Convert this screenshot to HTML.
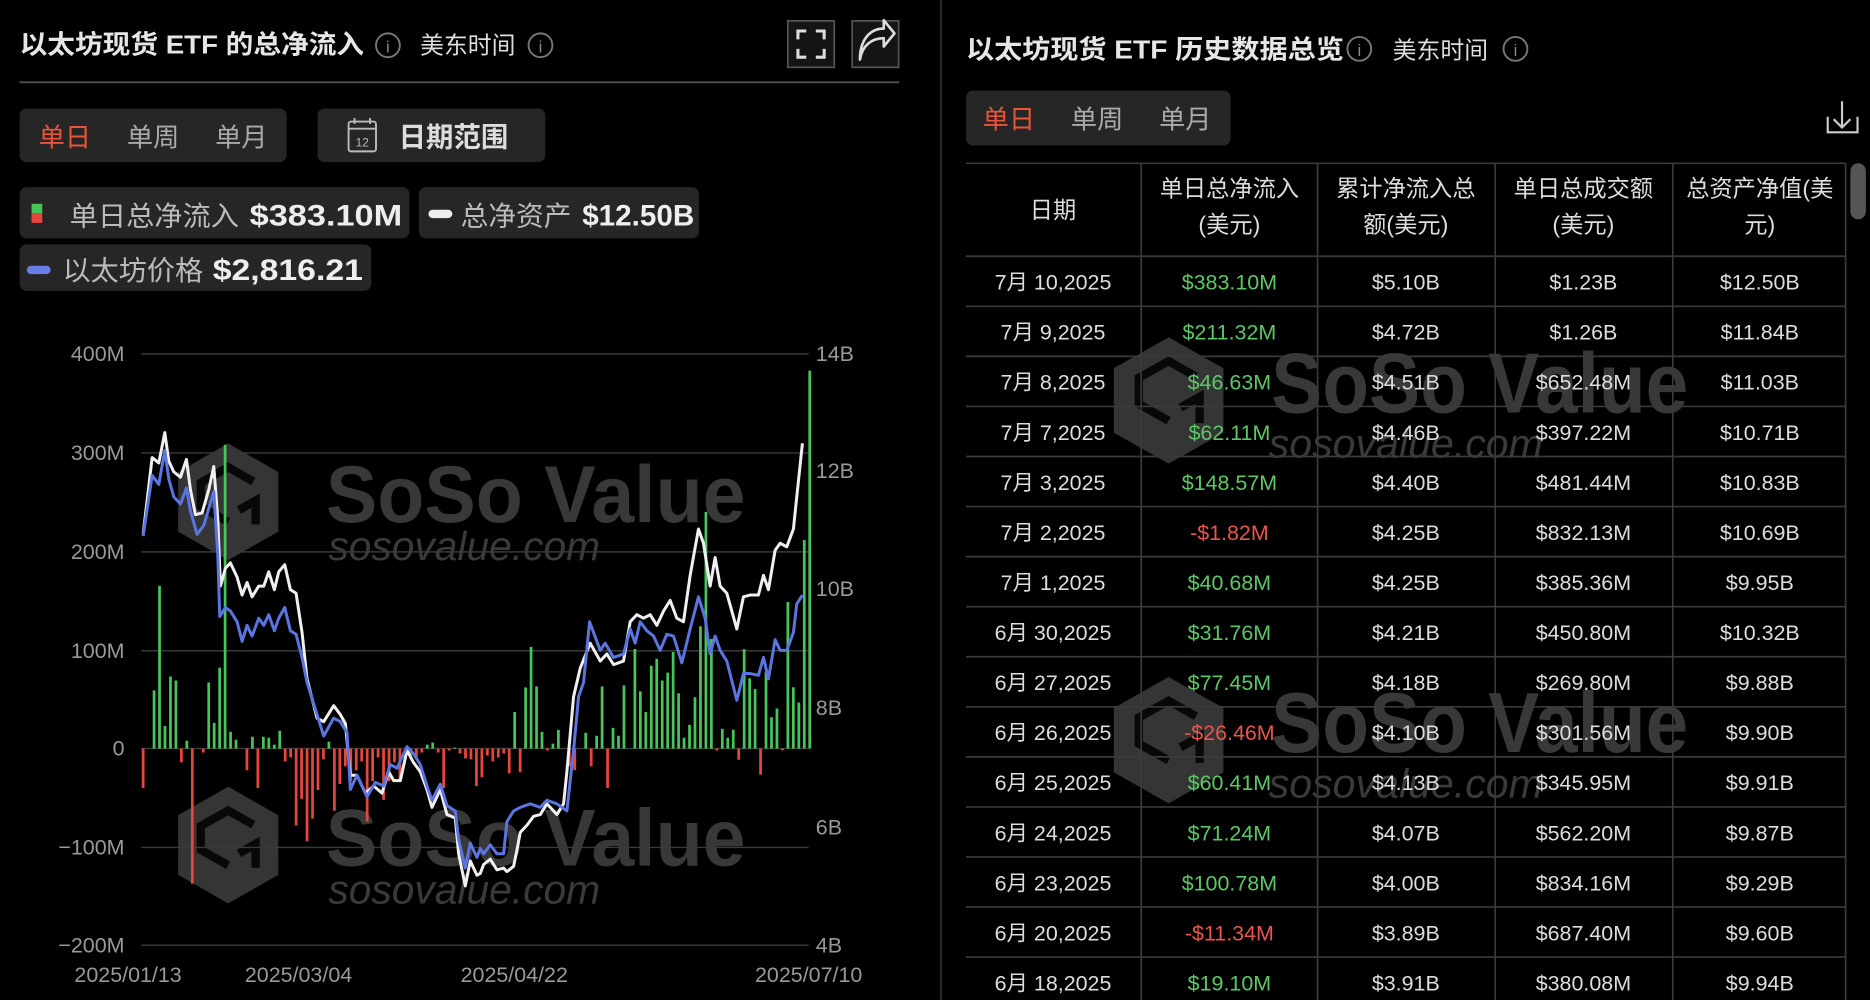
<!DOCTYPE html>
<html><head><meta charset="utf-8"><style>
html,body{margin:0;padding:0;background:#000;width:1870px;height:1000px;overflow:hidden}
svg{display:block}
text{font-family:"Liberation Sans","Noto Sans CJK SC",sans-serif}
</style></head><body>
<svg width="1870" height="1000" viewBox="0 0 1568 839" xmlns="http://www.w3.org/2000/svg">
<rect width="1568" height="839" fill="#000"/>

<!-- ===== LEFT PANEL ===== -->
<text x="16" y="45" font-size="22" font-weight="bold" fill="#e6e6e6" textLength="289" lengthAdjust="spacingAndGlyphs">以太坊现货 ETF 的总净流入</text>
<circle cx="325" cy="38" r="10" fill="none" stroke="#777" stroke-width="1.6"/>
<text x="325" y="44" font-size="14" fill="#888" text-anchor="middle">i</text>
<text x="352" y="45" font-size="20" fill="#ddd" textLength="80" lengthAdjust="spacingAndGlyphs">美东时间</text>
<circle cx="453" cy="38" r="10" fill="none" stroke="#777" stroke-width="1.6"/>
<text x="453" y="44" font-size="14" fill="#888" text-anchor="middle">i</text>

<rect x="660.5" y="17.5" width="39" height="39" fill="#141414" stroke="#555" stroke-width="1.4"/>
<path d="M669 33v-7h7M684 26h7v7M691 41v7h-7M676 48h-7v-7" fill="none" stroke="#ddd" stroke-width="2.6"/>
<rect x="714.5" y="17.5" width="39" height="39" fill="#141414" stroke="#555" stroke-width="1.4"/>
<path d="M721 50c2-12 10-18 20-18v7l9-11-9-11v7c-12 0-20 10-20 26z" fill="none" stroke="#ddd" stroke-width="2.2" stroke-linejoin="round"/>

<line x1="16" y1="69" x2="754" y2="69" stroke="#555" stroke-width="1.5"/>

<rect x="16" y="91" width="224" height="45" rx="6" fill="#262626"/>
<text x="32" y="123" font-size="22" fill="#e8553a">单日</text>
<text x="106" y="123" font-size="22" fill="#aaa">单周</text>
<text x="180" y="123" font-size="22" fill="#aaa">单月</text>
<rect x="266" y="91" width="191" height="45" rx="6" fill="#262626"/>
<rect x="292" y="102" width="23" height="25" rx="2" fill="none" stroke="#bbb" stroke-width="1.6"/>
<line x1="292" y1="108" x2="315" y2="108" stroke="#bbb" stroke-width="1.6"/>
<line x1="297" y1="99" x2="297" y2="104" stroke="#bbb" stroke-width="1.6"/>
<line x1="310" y1="99" x2="310" y2="104" stroke="#bbb" stroke-width="1.6"/>
<text x="303.5" y="123" font-size="10" fill="#bbb" text-anchor="middle">12</text>
<text x="334" y="123" font-size="23" font-weight="bold" fill="#ddd">日期范围</text>

<rect x="16" y="157" width="327" height="43" rx="6" fill="#262626"/>
<rect x="26" y="171" width="9" height="8" fill="#47c45a"/>
<rect x="26" y="179" width="9" height="8" fill="#e8453c"/>
<text x="58" y="189" font-size="23" fill="#bbb" textLength="142" lengthAdjust="spacingAndGlyphs">单日总净流入</text>
<text x="209" y="189" font-size="25" font-weight="bold" fill="#eee" textLength="128" lengthAdjust="spacingAndGlyphs">$383.10M</text>
<rect x="351" y="157" width="235" height="43" rx="6" fill="#262626"/>
<rect x="359" y="176" width="20" height="7" rx="3.5" fill="#eee"/>
<text x="386" y="189" font-size="23" fill="#bbb" textLength="93" lengthAdjust="spacingAndGlyphs">总净资产</text>
<text x="488" y="189" font-size="25" font-weight="bold" fill="#eee" textLength="94" lengthAdjust="spacingAndGlyphs">$12.50B</text>
<rect x="16" y="205" width="295" height="39" rx="6" fill="#262626"/>
<rect x="22" y="223" width="20" height="7" rx="3.5" fill="#6a7fe6"/>
<text x="52" y="235" font-size="23" fill="#bbb" textLength="118" lengthAdjust="spacingAndGlyphs">以太坊价格</text>
<text x="178" y="235" font-size="25" font-weight="bold" fill="#eee" textLength="126" lengthAdjust="spacingAndGlyphs">$2,816.21</text>

<!-- watermarks -->
<g fill="#353535">
  <path d="M191 372 L233 396 L233 446 L191 470 L149 446 L149 396 Z"/>
  <path d="M191 660 L233 684 L233 734 L191 758 L149 734 L149 684 Z"/>
  <path d="M980 283 L1026 309 L1026 363 L980 389 L934 363 L934 309 Z"/>
  <path d="M980 568 L1026 594 L1026 648 L980 674 L934 648 L934 594 Z"/>
</g>
<g fill="none" stroke="#000" stroke-width="7" opacity="0.85">
  <path d="M212 404 L191 392 L168 405 L168 425 L191 438 M200 428 L214 420 L214 440"/>
  <path d="M212 692 L191 680 L168 693 L168 713 L191 726 M200 716 L214 708 L214 728"/>
  <path d="M1003 316 L980 303 L955 317 L955 339 L980 353 M990 342 L1006 333 L1006 355"/>
  <path d="M1003 601 L980 588 L955 602 L955 624 L980 638 M990 627 L1006 618 L1006 640"/>
</g>
<g font-family="Liberation Sans,sans-serif" font-weight="bold" fill="#383838">
  <text x="273" y="438" font-size="68" textLength="352" lengthAdjust="spacingAndGlyphs">SoSo Value</text>
  <text x="273" y="726" font-size="68" textLength="352" lengthAdjust="spacingAndGlyphs">SoSo Value</text>
  <text x="1066" y="346" font-size="72" textLength="350" lengthAdjust="spacingAndGlyphs">SoSo Value</text>
  <text x="1066" y="631" font-size="72" textLength="350" lengthAdjust="spacingAndGlyphs">SoSo Value</text>
</g>
<g font-style="italic" fill="#3a3a3a">
  <text x="275" y="470" font-size="34" textLength="228" lengthAdjust="spacingAndGlyphs">sosovalue.com</text>
  <text x="275" y="758" font-size="34" textLength="228" lengthAdjust="spacingAndGlyphs">sosovalue.com</text>
  <text x="1064" y="384" font-size="34" textLength="230" lengthAdjust="spacingAndGlyphs">sosovalue.com</text>
  <text x="1064" y="669" font-size="34" textLength="230" lengthAdjust="spacingAndGlyphs">sosovalue.com</text>
</g>

<!-- grid -->
<g stroke="#3a3a3a" stroke-width="1.2">
  <line x1="118" y1="297" x2="678" y2="297"/><line x1="118" y1="380" x2="678" y2="380"/>
  <line x1="118" y1="463" x2="678" y2="463"/><line x1="118" y1="546" x2="678" y2="546"/>
  <line x1="118" y1="628" x2="678" y2="628"/><line x1="118" y1="711" x2="678" y2="711"/>
  <line x1="118" y1="793" x2="678" y2="793"/>
</g>
<g font-size="18" fill="#999" text-anchor="end">
  <text x="104" y="303">400M</text><text x="104" y="386">300M</text><text x="104" y="469">200M</text>
  <text x="104" y="552">100M</text><text x="104" y="634">0</text><text x="104" y="717">−100M</text>
  <text x="104" y="799">−200M</text>
</g>
<g font-size="18" fill="#999">
  <text x="684" y="303">14B</text><text x="684" y="401">12B</text><text x="684" y="500">10B</text>
  <text x="684" y="600">8B</text><text x="684" y="700">6B</text><text x="684" y="799">4B</text>
</g>
<g font-size="18" fill="#999" text-anchor="middle">
  <text x="107" y="824">2025/01/13</text><text x="250" y="824">2025/03/04</text>
  <text x="431" y="824">2025/04/22</text><text x="678" y="824">2025/07/10</text>
</g>

<g transform="scale(0.83852)">
 <g transform="translate(141.3,749) scale(5.467,-0.987)">
  <g fill="#47c45a">
   <rect x="2" y="0" width="0.5" height="59"/><rect x="3" y="0" width="0.5" height="165"/><rect x="4" y="0" width="0.5" height="23"/>
   <rect x="5" y="0" width="0.5" height="73"/><rect x="6" y="0" width="0.5" height="69"/><rect x="8" y="0" width="0.5" height="8"/>
   <rect x="12" y="0" width="0.5" height="67"/><rect x="13" y="0" width="0.5" height="26"/><rect x="14" y="0" width="0.5" height="82"/>
   <rect x="15" y="0" width="0.5" height="308"/><rect x="16" y="0" width="0.5" height="17"/><rect x="17" y="0" width="0.5" height="9"/>
   <rect x="20" y="0" width="0.5" height="12"/><rect x="22" y="0" width="0.5" height="12"/><rect x="23" y="0" width="0.5" height="11"/>
   <rect x="24" y="0" width="0.5" height="4"/><rect x="25" y="0" width="0.5" height="18"/><rect x="34" y="0" width="0.5" height="7"/>
   <rect x="52" y="0" width="0.5" height="4"/><rect x="53" y="0" width="0.5" height="6"/><rect x="57" y="0" width="0.5" height="1"/>
   <rect x="68" y="0" width="0.5" height="37"/><rect x="70" y="0" width="0.5" height="62"/><rect x="71" y="0" width="0.5" height="103"/>
   <rect x="72" y="0" width="0.5" height="63"/><rect x="73" y="0" width="0.5" height="17"/><rect x="75" y="0" width="0.5" height="5"/>
   <rect x="76" y="0" width="0.5" height="19"/><rect x="81" y="0" width="0.5" height="16"/><rect x="83" y="0" width="0.5" height="13"/>
   <rect x="84" y="0" width="0.5" height="63"/><rect x="86" y="0" width="0.5" height="21"/><rect x="87" y="0" width="0.5" height="13"/>
   <rect x="88" y="0" width="0.5" height="64"/><rect x="90" y="0" width="0.5" height="101"/><rect x="91" y="0" width="0.5" height="58"/>
   <rect x="92" y="0" width="0.5" height="37"/><rect x="93" y="0" width="0.5" height="84"/><rect x="94" y="0" width="0.5" height="91"/>
   <rect x="95" y="0" width="0.5" height="69"/><rect x="96" y="0" width="0.5" height="77"/><rect x="97" y="0" width="0.5" height="98"/>
   <rect x="98" y="0" width="0.5" height="56"/><rect x="99" y="0" width="0.5" height="11"/><rect x="100" y="0" width="0.5" height="24"/>
   <rect x="101" y="0" width="0.5" height="52"/><rect x="102" y="0" width="0.5" height="124"/><rect x="103" y="0" width="0.5" height="240"/>
   <rect x="104" y="0" width="0.5" height="111"/><rect x="106" y="0" width="0.5" height="20"/><rect x="107" y="0" width="0.5" height="11"/>
   <rect x="108" y="0" width="0.5" height="19.1"/><rect x="110" y="0" width="0.5" height="100.78"/><rect x="111" y="0" width="0.5" height="71.24"/>
   <rect x="112" y="0" width="0.5" height="60.41"/><rect x="114" y="0" width="0.5" height="77.45"/><rect x="115" y="0" width="0.5" height="31.76"/>
   <rect x="116" y="0" width="0.5" height="40.68"/><rect x="118" y="0" width="0.5" height="148.57"/><rect x="119" y="0" width="0.5" height="62.11"/>
   <rect x="120" y="0" width="0.5" height="46.63"/><rect x="121" y="0" width="0.5" height="211.32"/><rect x="122" y="0" width="0.5" height="383.1"/>
  </g>
  <g fill="#e8453c">
   <rect x="0" y="-40" width="0.5" height="40"/><rect x="7" y="-14" width="0.5" height="14"/><rect x="9" y="-137" width="0.5" height="137"/>
   <rect x="11" y="-4" width="0.5" height="4"/><rect x="19" y="-22" width="0.5" height="22"/><rect x="21" y="-40" width="0.5" height="40"/>
   <rect x="26" y="-13" width="0.5" height="13"/><rect x="27" y="-9" width="0.5" height="9"/><rect x="28" y="-78" width="0.5" height="78"/>
   <rect x="29" y="-51" width="0.5" height="51"/><rect x="30" y="-94" width="0.5" height="94"/><rect x="31" y="-71" width="0.5" height="71"/>
   <rect x="32" y="-42" width="0.5" height="42"/><rect x="33" y="-11" width="0.5" height="11"/><rect x="35" y="-63" width="0.5" height="63"/>
   <rect x="36" y="-36" width="0.5" height="36"/><rect x="37" y="-18" width="0.5" height="18"/><rect x="38" y="-33" width="0.5" height="33"/>
   <rect x="39" y="-22" width="0.5" height="22"/><rect x="40" y="-13" width="0.5" height="13"/><rect x="41" y="-74" width="0.5" height="74"/>
   <rect x="42" y="-33" width="0.5" height="33"/><rect x="43" y="-9" width="0.5" height="9"/><rect x="44" y="-52" width="0.5" height="52"/>
   <rect x="45" y="-33" width="0.5" height="33"/><rect x="46" y="-14" width="0.5" height="14"/><rect x="47" y="-33" width="0.5" height="33"/>
   <rect x="48" y="-11" width="0.5" height="11"/><rect x="49" y="-7" width="0.5" height="7"/><rect x="50" y="-9" width="0.5" height="9"/>
   <rect x="51" y="-4" width="0.5" height="4"/><rect x="54" y="-4" width="0.5" height="4"/><rect x="55" y="-40" width="0.5" height="40"/>
   <rect x="56" y="-2" width="0.5" height="2"/><rect x="58" y="-5" width="0.5" height="5"/><rect x="59" y="-10" width="0.5" height="10"/>
   <rect x="60" y="-11" width="0.5" height="11"/><rect x="61" y="-38" width="0.5" height="38"/><rect x="62" y="-29" width="0.5" height="29"/>
   <rect x="63" y="-7" width="0.5" height="7"/><rect x="64" y="-13" width="0.5" height="13"/><rect x="65" y="-9" width="0.5" height="9"/>
   <rect x="66" y="-5" width="0.5" height="5"/><rect x="67" y="-25" width="0.5" height="25"/><rect x="69" y="-24" width="0.5" height="24"/>
   <rect x="74" y="-2" width="0.5" height="2"/><rect x="78" y="-18" width="0.5" height="18"/><rect x="79" y="-22" width="0.5" height="22"/>
   <rect x="82" y="-18" width="0.5" height="18"/><rect x="85" y="-40" width="0.5" height="40"/><rect x="105" y="-2" width="0.5" height="2"/>
   <rect x="109" y="-11.34" width="0.5" height="11.34"/><rect x="113" y="-26.46" width="0.5" height="26.46"/><rect x="117" y="-1.82" width="0.5" height="1.82"/>
  </g>
 </g>
 <g transform="translate(130,340) scale(0.33333,0.35714)" fill="none" stroke-linejoin="round">
  <polyline vector-effect="non-scaling-stroke" stroke="#f0f0f0" stroke-width="3" points="38,545 65,330 85,345 103,260 115,340 130,370 150,385 168,335 180,420 195,490 215,485 235,420 250,355 262,500 270,690 285,640 300,625 320,665 335,715 350,680 365,720 385,690 400,690 415,650 432,700 445,650 463,630 480,700 497,710 515,820 530,950 560,1060 580,1070 610,1025 630,1050 645,1075 660,1220 680,1220 705,1270 730,1250 755,1270 775,1210 790,1235 810,1235 830,1150 850,1185 870,1210 890,1260 905,1310 930,1260 950,1330 975,1340 985,1440 1005,1530 1020,1460 1040,1500 1050,1495 1060,1470 1080,1455 1100,1485 1120,1480 1130,1490 1150,1475 1160,1430 1170,1380 1190,1360 1210,1335 1230,1330 1250,1300 1260,1310 1280,1330 1300,1300 1310,1210 1330,1000 1350,920 1380,850 1410,900 1430,880 1450,910 1480,900 1500,790 1520,770 1540,780 1560,770 1580,800 1600,760 1620,730 1640,780 1660,790 1680,660 1705,530 1720,570 1740,690 1755,610 1770,690 1790,710 1820,810 1840,720 1860,715 1885,715 1900,660 1915,700 1935,590 1950,570 1970,580 1990,530 2000,440 2017,290"/>
  <polyline vector-effect="non-scaling-stroke" stroke="#5b74e0" stroke-width="3" points="38,550 65,380 85,405 103,310 115,390 130,440 150,460 168,415 180,480 200,545 220,520 250,425 262,600 268,775 285,750 300,760 320,790 335,845 350,800 365,830 385,780 400,800 415,770 432,815 445,780 463,750 480,815 497,825 515,890 530,960 560,1050 580,1110 610,1060 630,1070 650,1100 660,1260 680,1220 710,1280 735,1240 760,1250 780,1190 800,1200 830,1140 850,1160 870,1190 890,1250 905,1290 930,1245 950,1305 975,1320 985,1400 1005,1480 1020,1410 1040,1450 1050,1425 1060,1440 1080,1415 1100,1440 1120,1440 1130,1350 1150,1320 1170,1310 1200,1300 1230,1310 1250,1290 1280,1300 1310,1320 1330,1150 1345,1000 1360,960 1378,790 1410,870 1425,850 1450,890 1480,880 1500,810 1515,850 1530,790 1550,815 1570,830 1590,870 1610,825 1630,830 1655,905 1680,810 1705,720 1725,780 1740,880 1755,830 1770,870 1790,900 1820,1010 1840,935 1860,935 1885,940 1900,890 1915,950 1935,840 1950,870 1970,870 1990,820 2000,740 2017,715"/>
 </g>
</g>

<!-- ===== RIGHT PANEL ===== -->
<line x1="789" y1="0" x2="789" y2="839" stroke="#2e2e2e" stroke-width="1.5"/>
<text x="810" y="49" font-size="22" font-weight="bold" fill="#e6e6e6" textLength="317" lengthAdjust="spacingAndGlyphs">以太坊现货 ETF 历史数据总览</text>
<circle cx="1140" cy="41" r="10" fill="none" stroke="#777" stroke-width="1.6"/>
<text x="1140" y="47" font-size="14" fill="#888" text-anchor="middle">i</text>
<text x="1168" y="49" font-size="20" fill="#ddd" textLength="80" lengthAdjust="spacingAndGlyphs">美东时间</text>
<circle cx="1271" cy="41" r="10" fill="none" stroke="#777" stroke-width="1.6"/>
<text x="1271" y="47" font-size="14" fill="#888" text-anchor="middle">i</text>

<rect x="810" y="76" width="222" height="46" rx="6" fill="#262626"/>
<text x="824" y="108" font-size="22" fill="#e8553a">单日</text>
<text x="898" y="108" font-size="22" fill="#aaa">单周</text>
<text x="972" y="108" font-size="22" fill="#aaa">单月</text>
<path d="M1545 85v22M1538 100l7 7 7-7M1533 98v13h25v-13" fill="none" stroke="#ccc" stroke-width="1.8"/>

<rect x="1552" y="137" width="13" height="47" rx="6.5" fill="#555"/>

<g stroke="#3a3a3a" stroke-width="1.4">
 <line x1="810" y1="137" x2="1548" y2="137"/>
 <line x1="810" y1="215" x2="1548" y2="215"/>
 <line x1="810" y1="257" x2="1548" y2="257"/><line x1="810" y1="299" x2="1548" y2="299"/>
 <line x1="810" y1="341" x2="1548" y2="341"/><line x1="810" y1="383" x2="1548" y2="383"/>
 <line x1="810" y1="425" x2="1548" y2="425"/><line x1="810" y1="467" x2="1548" y2="467"/>
 <line x1="810" y1="509" x2="1548" y2="509"/><line x1="810" y1="551" x2="1548" y2="551"/>
 <line x1="810" y1="593" x2="1548" y2="593"/><line x1="810" y1="635" x2="1548" y2="635"/>
 <line x1="810" y1="677" x2="1548" y2="677"/><line x1="810" y1="719" x2="1548" y2="719"/>
 <line x1="810" y1="761" x2="1548" y2="761"/><line x1="810" y1="803" x2="1548" y2="803"/>
 <line x1="957" y1="137" x2="957" y2="839"/><line x1="1105" y1="137" x2="1105" y2="839"/>
 <line x1="1254" y1="137" x2="1254" y2="839"/><line x1="1403" y1="137" x2="1403" y2="839"/>
 <line x1="1548" y1="137" x2="1548" y2="839"/>
</g>
<g font-size="19.5" fill="#ddd" text-anchor="middle">
 <text x="883" y="183">日期</text>
 <text x="1031" y="165">单日总净流入</text><text x="1031" y="195">(美元)</text>
 <text x="1179" y="165">累计净流入总</text><text x="1179" y="195">额(美元)</text>
 <text x="1328" y="165">单日总成交额</text><text x="1328" y="195">(美元)</text>
 <text x="1476" y="165">总资产净值(美</text><text x="1476" y="195">元)</text>
</g>
<g font-size="18" fill="#ddd" text-anchor="middle">
 <text x="883" y="243">7月 10,2025</text><text x="1179" y="243">$5.10B</text><text x="1328" y="243">$1.23B</text><text x="1476" y="243">$12.50B</text>
 <text x="883" y="285">7月 9,2025</text><text x="1179" y="285">$4.72B</text><text x="1328" y="285">$1.26B</text><text x="1476" y="285">$11.84B</text>
 <text x="883" y="327">7月 8,2025</text><text x="1179" y="327">$4.51B</text><text x="1328" y="327">$652.48M</text><text x="1476" y="327">$11.03B</text>
 <text x="883" y="369">7月 7,2025</text><text x="1179" y="369">$4.46B</text><text x="1328" y="369">$397.22M</text><text x="1476" y="369">$10.71B</text>
 <text x="883" y="411">7月 3,2025</text><text x="1179" y="411">$4.40B</text><text x="1328" y="411">$481.44M</text><text x="1476" y="411">$10.83B</text>
 <text x="883" y="453">7月 2,2025</text><text x="1179" y="453">$4.25B</text><text x="1328" y="453">$832.13M</text><text x="1476" y="453">$10.69B</text>
 <text x="883" y="495">7月 1,2025</text><text x="1179" y="495">$4.25B</text><text x="1328" y="495">$385.36M</text><text x="1476" y="495">$9.95B</text>
 <text x="883" y="537">6月 30,2025</text><text x="1179" y="537">$4.21B</text><text x="1328" y="537">$450.80M</text><text x="1476" y="537">$10.32B</text>
 <text x="883" y="579">6月 27,2025</text><text x="1179" y="579">$4.18B</text><text x="1328" y="579">$269.80M</text><text x="1476" y="579">$9.88B</text>
 <text x="883" y="621">6月 26,2025</text><text x="1179" y="621">$4.10B</text><text x="1328" y="621">$301.56M</text><text x="1476" y="621">$9.90B</text>
 <text x="883" y="663">6月 25,2025</text><text x="1179" y="663">$4.13B</text><text x="1328" y="663">$345.95M</text><text x="1476" y="663">$9.91B</text>
 <text x="883" y="705">6月 24,2025</text><text x="1179" y="705">$4.07B</text><text x="1328" y="705">$562.20M</text><text x="1476" y="705">$9.87B</text>
 <text x="883" y="747">6月 23,2025</text><text x="1179" y="747">$4.00B</text><text x="1328" y="747">$834.16M</text><text x="1476" y="747">$9.29B</text>
 <text x="883" y="789">6月 20,2025</text><text x="1179" y="789">$3.89B</text><text x="1328" y="789">$687.40M</text><text x="1476" y="789">$9.60B</text>
 <text x="883" y="831">6月 18,2025</text><text x="1179" y="831">$3.91B</text><text x="1328" y="831">$380.08M</text><text x="1476" y="831">$9.94B</text>
</g>
<g font-size="18" text-anchor="middle" fill="#5cc766">
 <text x="1031" y="243">$383.10M</text><text x="1031" y="285">$211.32M</text><text x="1031" y="327">$46.63M</text>
 <text x="1031" y="369">$62.11M</text><text x="1031" y="411">$148.57M</text>
 <text x="1031" y="453" fill="#e8554c">-$1.82M</text>
 <text x="1031" y="495">$40.68M</text><text x="1031" y="537">$31.76M</text><text x="1031" y="579">$77.45M</text>
 <text x="1031" y="621" fill="#e8554c">-$26.46M</text>
 <text x="1031" y="663">$60.41M</text><text x="1031" y="705">$71.24M</text><text x="1031" y="747">$100.78M</text>
 <text x="1031" y="789" fill="#e8554c">-$11.34M</text>
 <text x="1031" y="831">$19.10M</text>
</g>
</svg>
</body></html>
